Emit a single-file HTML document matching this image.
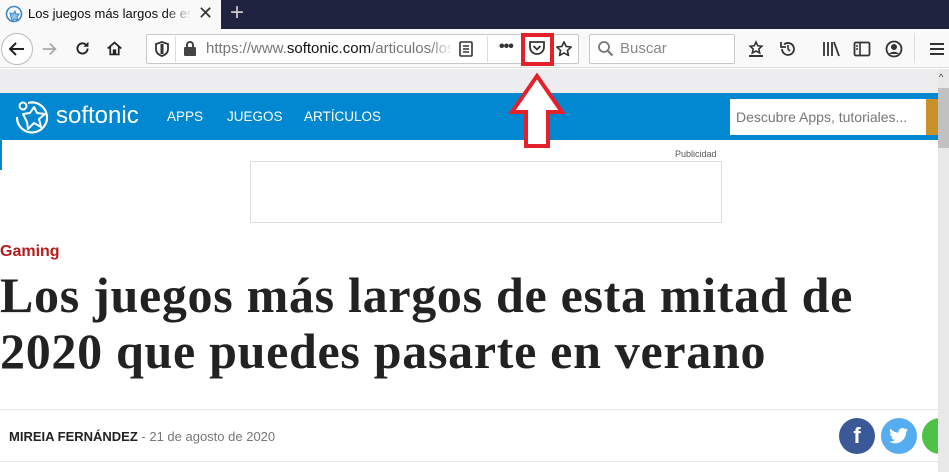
<!DOCTYPE html>
<html><head><meta charset="utf-8"><style>
*{margin:0;padding:0;box-sizing:border-box}
body{width:949px;height:472px;overflow:hidden;background:#fff;font-family:"Liberation Sans",sans-serif;position:relative}
.abs{position:absolute}
</style></head><body>
<div class="abs" style="left:0;top:0;width:949px;height:29px;background:#202340"></div>
<div class="abs" style="left:0;top:0;width:221px;height:29px;background:#f9f9fa"></div>
<svg class="abs" style="left:5px;top:5px" width="18" height="18" viewBox="0 0 18 18"><circle cx="9" cy="9" r="7.5" fill="none" stroke="#3c86c6" stroke-width="1.6"/><path d="M5 8l3 1 2-3 1 3 3 0-2 3 1 3-3-1-3 2z" fill="#8cc3ea" stroke="#3c86c6" stroke-width="1"/></svg>
<div class="abs" style="left:28px;top:6px;font-size:13px;color:#0c0c0d;white-space:nowrap;width:162px;overflow:hidden">Los juegos más largos de esta mitad</div>
<div class="abs" style="left:165px;top:0;width:27px;height:29px;background:linear-gradient(90deg,rgba(249,249,250,0),#f9f9fa)"></div>
<div class="abs" style="left:198px;top:3px;font-size:18px;color:#333">✕</div>
<div class="abs" style="left:230px;top:-1px;font-size:24px;color:#ccc;font-weight:300">+</div>
<div class="abs" style="left:0;top:29px;width:949px;height:39px;background:#f9f9fa;border-bottom:1px solid #ddd"></div>
<div class="abs" style="left:1px;top:33px;width:32px;height:32px;border:1px solid #bbb;border-radius:50%;background:#fff"></div>
<svg class="abs" style="left:7px;top:39px" width="20" height="20" viewBox="0 0 20 20"><path d="M17 10H4M9 4l-6 6 6 6" fill="none" stroke="#222" stroke-width="2"/></svg>
<svg class="abs" style="left:40px;top:40px" width="18" height="18" viewBox="0 0 20 20"><path d="M3 10h13M11 4l6 6-6 6" fill="none" stroke="#aaa" stroke-width="2"/></svg>
<svg class="abs" style="left:74px;top:40px" width="17" height="17" viewBox="0 0 20 20"><path d="M16 10a6 6 0 1 1-2-4.5" fill="none" stroke="#222" stroke-width="2.2"/><path d="M17 2v6h-6z" fill="#222"/></svg>
<svg class="abs" style="left:106px;top:40px" width="17" height="17" viewBox="0 0 20 20"><path d="M2 10L10 3l8 7M5 8v9h4v-5h2v5h4V8" fill="none" stroke="#222" stroke-width="2"/></svg>
<div class="abs" style="left:146px;top:34px;width:433px;height:30px;border:1px solid #c8c8c8;border-radius:2px;background:#fff"></div>
<svg class="abs" style="left:155px;top:41px" width="14" height="16" viewBox="0 0 14 16"><path d="M7 1L1 3v5c0 4 3 6 6 7 3-1 6-3 6-7V3z" fill="none" stroke="#333" stroke-width="1.8"/><path d="M7 3v10" stroke="#333" stroke-width="3"/></svg>
<div class="abs" style="left:175px;top:36px;width:1px;height:26px;background:#ddd"></div>
<svg class="abs" style="left:183px;top:40px" width="14" height="16" viewBox="0 0 14 16"><rect x="1" y="7" width="12" height="9" rx="1" fill="#444"/><path d="M4 7V5a3 3 0 0 1 6 0v2" fill="none" stroke="#444" stroke-width="2"/></svg>
<div class="abs" style="left:206px;top:40px;font-size:15px;color:#777;white-space:nowrap;width:245px;overflow:hidden">https://www.<span style="color:#111">softonic.com</span>/articulos/los-juegos</div>
<div class="abs" style="left:430px;top:36px;width:24px;height:26px;background:linear-gradient(90deg,rgba(255,255,255,0),#fff)"></div>
<svg class="abs" style="left:459px;top:41px" width="14" height="16" viewBox="0 0 14 16"><rect x="1" y="1" width="12" height="14" rx="1" fill="none" stroke="#333" stroke-width="1.6"/><path d="M4 5h6M4 8h6M4 11h6" stroke="#333" stroke-width="1.4"/></svg>
<div class="abs" style="left:487px;top:36px;width:1px;height:26px;background:#ddd"></div>
<div class="abs" style="left:499px;top:38px;font-size:16px;color:#333;font-weight:bold;letter-spacing:-1px">•••</div>
<svg class="abs" style="left:528px;top:40px" width="18" height="16" viewBox="0 0 18 16"><path d="M2 2h14v5a7 7 0 0 1-14 0z" fill="none" stroke="#333" stroke-width="1.8"/><path d="M5.5 6l3.5 3.5L12.5 6" fill="none" stroke="#333" stroke-width="1.8"/></svg>
<div class="abs" style="left:521px;top:33px;width:33px;height:33px;border:4px solid #e4202a"></div>
<svg class="abs" style="left:555px;top:40px" width="18" height="18" viewBox="0 0 20 20"><path d="M10 2l2.4 5.2 5.6.6-4.2 3.8 1.2 5.6L10 14.4 5 17.2l1.2-5.6L2 7.8l5.6-.6z" fill="none" stroke="#333" stroke-width="1.8" stroke-linejoin="round"/></svg>
<div class="abs" style="left:589px;top:34px;width:146px;height:30px;border:1px solid #c8c8c8;border-radius:2px;background:#fff"></div>
<svg class="abs" style="left:597px;top:40px" width="17" height="17" viewBox="0 0 17 17"><circle cx="7" cy="7" r="5" fill="none" stroke="#777" stroke-width="1.8"/><path d="M10.5 10.5l5 5" stroke="#777" stroke-width="2"/></svg>
<div class="abs" style="left:620px;top:40px;font-size:15px;color:#888">Buscar</div>
<svg class="abs" style="left:747px;top:40px" width="18" height="18" viewBox="0 0 18 18"><path d="M9 2l1.8 3.8 4 .4-3 2.8.9 4L9 11l-3.7 2 .9-4-3-2.8 4-.4z" fill="none" stroke="#333" stroke-width="1.6"/><path d="M2 16h14" stroke="#333" stroke-width="2"/></svg>
<svg class="abs" style="left:779px;top:40px" width="18" height="18" viewBox="0 0 18 18"><path d="M3 9a6 6 0 1 0 2-4.5" fill="none" stroke="#333" stroke-width="1.8"/><path d="M2 2v5h5" fill="none" stroke="#333" stroke-width="1.8"/><path d="M9 5v4l2 2" fill="none" stroke="#333" stroke-width="1.6"/></svg>
<svg class="abs" style="left:822px;top:40px" width="18" height="18" viewBox="0 0 18 18"><path d="M2 2v14M6 2v14M10 2v14M12 2l5 14" stroke="#333" stroke-width="1.8"/></svg>
<svg class="abs" style="left:853px;top:40px" width="18" height="18" viewBox="0 0 18 18"><rect x="1.5" y="2.5" width="15" height="13" rx="1.5" fill="none" stroke="#333" stroke-width="1.8"/><path d="M7 3v12M3 6h2M3 9h2" stroke="#333" stroke-width="1.6"/></svg>
<svg class="abs" style="left:885px;top:40px" width="18" height="18" viewBox="0 0 18 18"><circle cx="9" cy="9" r="7.5" fill="none" stroke="#333" stroke-width="1.8"/><circle cx="9" cy="7" r="3" fill="#333"/><path d="M4 14c2-3 8-3 10 0" fill="#333"/></svg>
<div class="abs" style="left:914px;top:33px;width:1px;height:30px;background:#ddd"></div>
<svg class="abs" style="left:929px;top:41px" width="16" height="16" viewBox="0 0 16 16"><path d="M1 3h14M1 8h14M1 13h14" stroke="#333" stroke-width="2"/></svg>
<div class="abs" style="left:0;top:69px;width:938px;height:24px;background:#ededf0"></div>
<div class="abs" style="left:938px;top:69px;width:11px;height:403px;background:#e8e8e8"></div>
<div class="abs" style="left:938px;top:88px;width:11px;height:60px;background:#c1c1c1"></div>
<div class="abs" style="left:939px;top:72px;font-size:9px;color:#333">^</div>
<div class="abs" style="left:0;top:93px;width:938px;height:47px;background:#0288d0"></div>
<div class="abs" style="left:0;top:140px;width:2px;height:30px;background:#0288d0"></div>
<svg class="abs" style="left:14px;top:99px" width="40" height="36" viewBox="0 0 40 36"><circle cx="9" cy="7" r="3.5" fill="none" stroke="#fff" stroke-width="2"/><path d="M14 4a15 15 0 1 1-11 14" fill="none" stroke="#fff" stroke-width="2.2"/><path d="M9 15l7-1 4-6 3 6 8 1-6 5 2 8-7-4-6 6-1-7z" fill="none" stroke="#fff" stroke-width="2" stroke-linejoin="round"/></svg>
<div class="abs" style="left:56px;top:102px;font-size:24px;color:#fff">softonic</div>
<div class="abs" style="left:167px;top:109px;font-size:13.5px;color:#fff">APPS</div>
<div class="abs" style="left:227px;top:109px;font-size:13.5px;color:#fff">JUEGOS</div>
<div class="abs" style="left:304px;top:109px;font-size:13.5px;color:#fff">ARTÍCULOS</div>
<div class="abs" style="left:730px;top:99px;width:196px;height:36px;background:#fff"></div>
<div class="abs" style="left:736px;top:109px;font-size:14px;color:#777">Descubre Apps, tutoriales...</div>
<div class="abs" style="left:926px;top:99px;width:12px;height:36px;background:#c8922a"></div>
<svg class="abs" style="left:508px;top:72px" width="60" height="80" viewBox="0 0 60 80"><path d="M29 4L4 40h14v34h22V40h14z" fill="#fff" stroke="#e4202a" stroke-width="4" stroke-linejoin="miter"/></svg>
<div class="abs" style="left:675px;top:149px;font-size:9px;color:#555">Publicidad</div>
<div class="abs" style="left:250px;top:161px;width:472px;height:62px;border:1px solid #ddd"></div>
<div class="abs" style="left:0;top:243px;font-size:16px;color:#b71c1c;font-weight:bold">Gaming</div>
<div class="abs" style="left:0;top:267px;width:938px;font-family:'Liberation Serif',serif;font-weight:bold;font-size:50px;letter-spacing:0.7px;line-height:56px;color:#222;white-space:nowrap">Los juegos más largos de esta mitad de<br>2020 que puedes pasarte en verano</div>
<div class="abs" style="left:0;top:409px;width:938px;height:1px;background:#e5e5e5"></div>
<div class="abs" style="left:0;top:461px;width:938px;height:1px;background:#e5e5e5"></div>
<div class="abs" style="left:9px;top:429px;font-size:13px;color:#777"><b style="color:#222">MIREIA FERNÁNDEZ</b> - 21 de agosto de 2020</div>
<div class="abs" style="left:839px;top:418px;width:36px;height:36px;border-radius:50%;background:#3b5998;color:#fff;font-weight:bold;font-size:22px;text-align:center;line-height:36px">f</div>
<div class="abs" style="left:881px;top:418px;width:36px;height:36px;border-radius:50%;background:#55acee"></div>
<svg class="abs" style="left:889px;top:427px" width="20" height="18" viewBox="0 0 24 20"><path d="M23 2.5a9 9 0 0 1-2.7.8A4.7 4.7 0 0 0 22.4.7a9.4 9.4 0 0 1-3 1.1A4.7 4.7 0 0 0 11.5 6 13.3 13.3 0 0 1 1.6 1a4.7 4.7 0 0 0 1.5 6.3 4.6 4.6 0 0 1-2.1-.6 4.7 4.7 0 0 0 3.8 4.6 4.7 4.7 0 0 1-2.1.1 4.7 4.7 0 0 0 4.4 3.3A9.4 9.4 0 0 1 0 16.6 13.3 13.3 0 0 0 7.2 18.7c8.6 0 13.4-7.2 13.4-13.4v-.6A9.5 9.5 0 0 0 23 2.5z" fill="#fff"/></svg>
<div class="abs" style="left:922px;top:418px;width:16px;height:36px;overflow:hidden"><div style="width:36px;height:36px;border-radius:50%;background:#4dc247"></div></div>
</body></html>
